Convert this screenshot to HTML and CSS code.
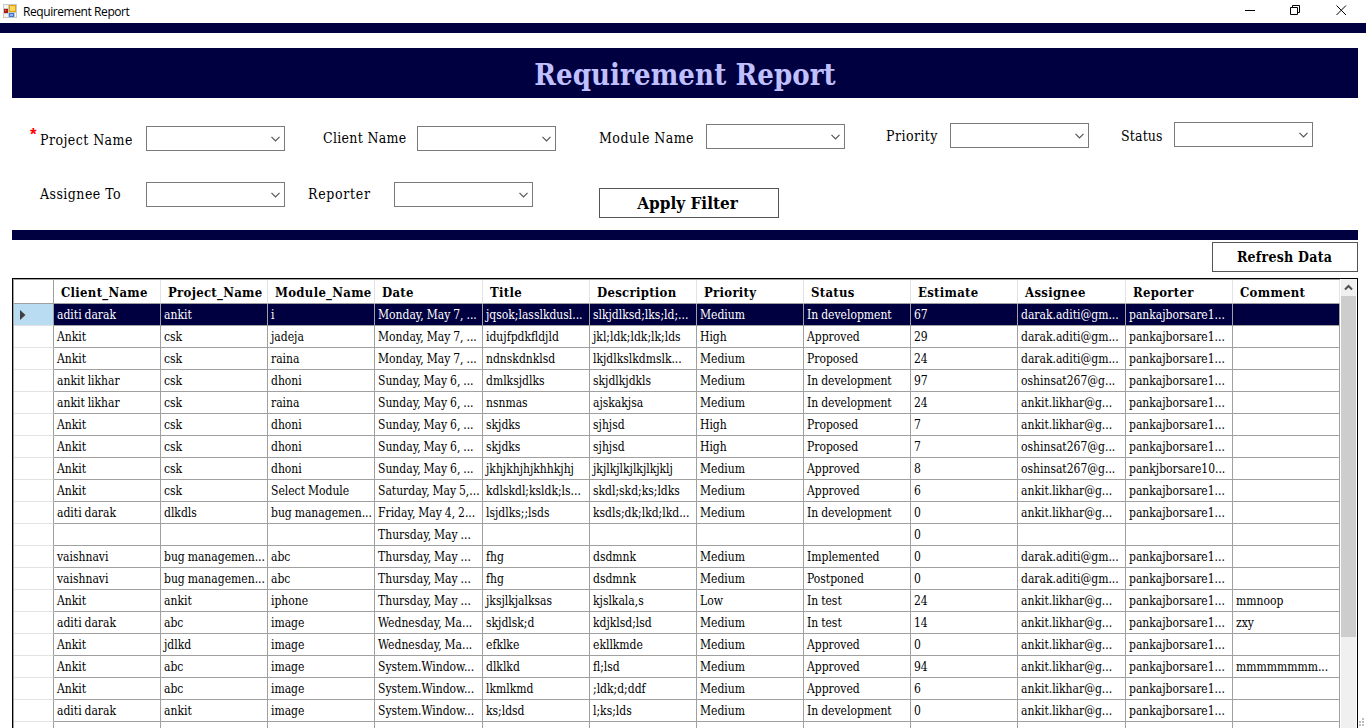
FILE: index.html
```html
<!DOCTYPE html>
<html lang="en">
<head>
<meta charset="utf-8">
<title>Requirement Report</title>
<link rel="stylesheet" href="styles.css">
</head>
<body>
<header class="titlebar">
  <svg class="app-icon" width="14" height="14" viewBox="0 0 14 14">
    <rect width="14" height="14" fill="#c9c9c9"/>
    <path d="M1 1h4v3H1zM1 10h4v3H1zM12 9h1v4h-1z" fill="#f4f4f4"/>
    <rect x="1" y="5" width="4" height="4" fill="#b01818"/><rect x="2" y="6" width="1" height="1" fill="#f08080"/>
    <rect x="6" y="1" width="7" height="7" fill="#e0a000"/><rect x="7" y="2" width="5" height="5" fill="#ffd75e"/>
    <rect x="6" y="9" width="5" height="4" fill="#3a74d8"/><rect x="7" y="10" width="3" height="2" fill="#8db6f5"/>
  </svg>
  <span class="window-title">Requirement Report</span>
  <svg class="window-buttons" width="102" height="12" viewBox="0 0 102 12" fill="none" stroke="#000">
    <path d="M0 5.500h10M45.500 2.500h7v7h-7zM47.500 2v-1.500h7v7H53"/>
    <path d="M91.500 .500l9.500 9.500M101 .500l-9.500 9.500"/>
  </svg>
</header>
<div class="bar"></div>
<main class="form">
  <h1 class="banner">Requirement Report</h1>
  <section class="filters">
    <div class="filter-row">
      <span class="required">*</span>
      <div class="field project"><label>Project Name</label><div class="combo"><svg width="9" height="6" viewBox="0 0 9 6"><path d="M.5 .8l4 4 4-4"/></svg></div></div>
      <div class="field client"><label>Client Name</label><div class="combo"><svg width="9" height="6" viewBox="0 0 9 6"><path d="M.5 .8l4 4 4-4"/></svg></div></div>
      <div class="field module"><label>Module Name</label><div class="combo"><svg width="9" height="6" viewBox="0 0 9 6"><path d="M.5 .8l4 4 4-4"/></svg></div></div>
      <div class="field priority"><label>Priority</label><div class="combo"><svg width="9" height="6" viewBox="0 0 9 6"><path d="M.5 .8l4 4 4-4"/></svg></div></div>
      <div class="field status"><label>Status</label><div class="combo"><svg width="9" height="6" viewBox="0 0 9 6"><path d="M.5 .8l4 4 4-4"/></svg></div></div>
    </div>
    <div class="filter-row second">
      <div class="field assignee"><label>Assignee To</label><div class="combo"><svg width="9" height="6" viewBox="0 0 9 6"><path d="M.5 .8l4 4 4-4"/></svg></div></div>
      <div class="field reporter"><label>Reporter</label><div class="combo"><svg width="9" height="6" viewBox="0 0 9 6"><path d="M.5 .8l4 4 4-4"/></svg></div></div>
      <button class="button apply">Apply Filter</button>
    </div>
  </section>
  <div class="bar"></div>
  <button class="button refresh">Refresh Data</button>
  <div class="grid">
    <table class="data">
      <colgroup><col class="c40"><col><col><col><col class="c108"><col><col><col><col><col><col class="c108"><col><col></colgroup>
      <thead>
      <tr><th><th>Client_Name<th>Project_Name<th>Module_Name<th>Date<th>Title<th>Description<th>Priority<th>Status<th>Estimate<th>Assignee<th>Reporter<th>Comment
      </thead>
      <tbody>
      <tr class="selected"><th><svg width="6" height="10" viewBox="0 0 6 10"><path d="M0 0l5.500 5L0 10z" fill="#404040"/></svg><td>aditi darak<td>ankit<td>i<td>Monday, May 7, ...<td>jqsok;lasslkdusl...<td>slkjdlksd;lks;ld;...<td>Medium<td>In development<td>67<td>darak.aditi@gm...<td>pankajborsare1...<td>
      <tr><th><td>Ankit<td>csk<td>jadeja<td>Monday, May 7, ...<td>idujfpdkfldjld<td>jkl;ldk;ldk;lk;lds<td>High<td>Approved<td>29<td>darak.aditi@gm...<td>pankajborsare1...<td>
      <tr><th><td>Ankit<td>csk<td>raina<td>Monday, May 7, ...<td>ndnskdnklsd<td>lkjdlkslkdmslk...<td>Medium<td>Proposed<td>24<td>darak.aditi@gm...<td>pankajborsare1...<td>
      <tr><th><td>ankit likhar<td>csk<td>dhoni<td>Sunday, May 6, ...<td>dmlksjdlks<td>skjdlkjdkls<td>Medium<td>In development<td>97<td>oshinsat267@g...<td>pankajborsare1...<td>
      <tr><th><td>ankit likhar<td>csk<td>raina<td>Sunday, May 6, ...<td>nsnmas<td>ajskakjsa<td>Medium<td>In development<td>24<td>ankit.likhar@g...<td>pankajborsare1...<td>
      <tr><th><td>Ankit<td>csk<td>dhoni<td>Sunday, May 6, ...<td>skjdks<td>sjhjsd<td>High<td>Proposed<td>7<td>ankit.likhar@g...<td>pankajborsare1...<td>
      <tr><th><td>Ankit<td>csk<td>dhoni<td>Sunday, May 6, ...<td>skjdks<td>sjhjsd<td>High<td>Proposed<td>7<td>oshinsat267@g...<td>pankajborsare1...<td>
      <tr><th><td>Ankit<td>csk<td>dhoni<td>Sunday, May 6, ...<td>jkhjkhjhjkhhkjhj<td>jkjlkjlkjlkjlkjklj<td>Medium<td>Approved<td>8<td>oshinsat267@g...<td>pankjborsare10...<td>
      <tr><th><td>Ankit<td>csk<td>Select Module<td>Saturday, May 5,...<td>kdlskdl;ksldk;ls...<td>skdl;skd;ks;ldks<td>Medium<td>Approved<td>6<td>ankit.likhar@g...<td>pankajborsare1...<td>
      <tr><th><td>aditi darak<td>dlkdls<td>bug managemen...<td>Friday, May 4, 2...<td>lsjdlks;;lsds<td>ksdls;dk;lkd;lkd...<td>Medium<td>In development<td>0<td>ankit.likhar@g...<td>pankajborsare1...<td>
      <tr><th><td><td><td><td>Thursday, May ...<td><td><td><td><td>0<td><td><td>
      <tr><th><td>vaishnavi<td>bug managemen...<td>abc<td>Thursday, May ...<td>fhg<td>dsdmnk<td>Medium<td>Implemented<td>0<td>darak.aditi@gm...<td>pankajborsare1...<td>
      <tr><th><td>vaishnavi<td>bug managemen...<td>abc<td>Thursday, May ...<td>fhg<td>dsdmnk<td>Medium<td>Postponed<td>0<td>darak.aditi@gm...<td>pankajborsare1...<td>
      <tr><th><td>Ankit<td>ankit<td>iphone<td>Thursday, May ...<td>jksjlkjalksas<td>kjslkala,s<td>Low<td>In test<td>24<td>ankit.likhar@g...<td>pankajborsare1...<td>mmnoop
      <tr><th><td>aditi darak<td>abc<td>image<td>Wednesday, Ma...<td>skjdlsk;d<td>kdjklsd;lsd<td>Medium<td>In test<td>14<td>ankit.likhar@g...<td>pankajborsare1...<td>zxy
      <tr><th><td>Ankit<td>jdlkd<td>image<td>Wednesday, Ma...<td>efklke<td>ekllkmde<td>Medium<td>Approved<td>0<td>ankit.likhar@g...<td>pankajborsare1...<td>
      <tr><th><td>Ankit<td>abc<td>image<td>System.Window...<td>dlklkd<td>fl;lsd<td>Medium<td>Approved<td>94<td>ankit.likhar@g...<td>pankajborsare1...<td>mmmmmmmm...
      <tr><th><td>Ankit<td>abc<td>image<td>System.Window...<td>lkmlkmd<td>;ldk;d;ddf<td>Medium<td>Approved<td>6<td>ankit.likhar@g...<td>pankajborsare1...<td>
      <tr><th><td>aditi darak<td>ankit<td>image<td>System.Window...<td>ks;ldsd<td>l;ks;lds<td>Medium<td>In development<td>0<td>ankit.likhar@g...<td>pankajborsare1...<td>
      <tr><th><td><td><td><td><td><td><td><td><td><td><td><td>
      </tbody>
    </table>
    <div class="scrollbar">
      <div class="scroll-up"><svg width="9" height="7" viewBox="0 0 9 7"><path d="M1 5.500l3.500-3.500 3.500 3.500" fill="none" stroke="#505050" stroke-width="2"/></svg></div>
      <div class="thumb"></div>
    </div>
  </div>
</main>
<svg class="grip" width="6" height="9" viewBox="0 0 6 9" fill="#bfbfbf"><path d="M3 0h2v2H3zM0 3h2v2H0zM3 3h2v2H3zM0 6h2v2H0zM3 6h2v2H3z"/></svg>
</body>
</html>
```
FILE: styles.css
```css
* { box-sizing: border-box; }
body {
  margin: 0;
  height: 728px;
  overflow: hidden;
  background: #fff;
  color: #000;
  font-family: "DejaVu Serif Condensed", "DejaVu Serif", serif;
  font-stretch: condensed;
}
.titlebar { display: flex; align-items: center; height: 23px; padding: 0 19px 0 3px; }
.app-icon { margin-top: -1px; }
.window-title { margin-left: 6px; font: 12px "Open Sans", "Noto Sans", sans-serif; letter-spacing: -0.42px; }
.window-buttons { margin: -1px 0 0 auto; }
.bar { height: 10px; background: #000040; }
.form { display: flex; flex-direction: column; padding: 15px 8px 0 12px; height: 695px; }
.banner {
  flex: none;
  margin: 0;
  height: 50px;
  line-height: 54px;
  background: #000040;
  color: #c0c0ff;
  text-align: center;
  font-size: 29px;
  letter-spacing: 0.1px;
}
.filters { flex: none; height: 132px; padding: 24px 0 0 18px; }
.filter-row { display: flex; align-items: flex-start; height: 60px; }
.filter-row.second { padding-left: 10px; }
.required { width: 10px; margin-top: 3px; color: #f00; font: bold 17px/20px "Liberation Sans", sans-serif; }
.field { display: flex; align-items: flex-start; }
.field label { font-size: 14px; line-height: 25px; letter-spacing: 0.45px; white-space: nowrap; }
.combo {
  display: flex;
  align-items: center;
  justify-content: flex-end;
  width: 139px;
  height: 25px;
  padding-right: 4px;
  border: 1px solid #7a7a7a;
}
.combo path { fill: none; stroke: #555; stroke-width: 1.2; }
.project label { width: 106px; margin-top: 6px; }
.project .combo { margin-top: 4px; }
.client { margin-left: 38px; }
.client label { width: 94px; margin-top: 4px; letter-spacing: 0.3px; }
.client .combo { margin-top: 4px; }
.module { margin-left: 43px; }
.module label { width: 107px; margin-top: 4px; }
.module .combo { margin-top: 2px; }
.priority { margin-left: 41px; }
.priority label { width: 64px; margin-top: 2px; }
.priority .combo { margin-top: 1px; }
.status { margin-left: 32px; }
.status label { width: 53px; margin-top: 2px; letter-spacing: 0.15px; }
.assignee label { width: 106px; }
.reporter { margin-left: 23px; }
.reporter label { width: 86px; letter-spacing: 0.7px; }
.button {
  padding: 0;
  height: 30px;
  border: 1px solid #555;
  background: #fff;
  color: #000;
  font-family: inherit;
  font-stretch: inherit;
  font-weight: bold;
}
.apply { width: 180px; margin: 6px 0 0 66px; padding-right: 3px; font-size: 17px; }
.form > .bar { flex: none; }
.refresh { flex: none; align-self: flex-end; width: 146px; margin-top: 2px; padding-right: 1px; font-size: 14px; letter-spacing: 0.25px; }
.grid {
  display: flex;
  flex: none;
  height: 470px;
  margin-top: 6px;
  border: 1px solid #000;
}
.data {
  flex: none;
  width: 1327px;
  border-collapse: separate;
  border-spacing: 0;
  table-layout: fixed;
  border-left: 1px solid #a0a0a0;
  border-top: 1px solid #a0a0a0;
  align-self: flex-start;
}
.data col { width: 107px; }
.data .c40 { width: 40px; }
.data .c108 { width: 108px; }
.data td, .data th { padding: 0; white-space: nowrap; text-align: left; }
.data thead th {
  height: 24px;
  padding: 2px 0 0 7px;
  border-right: 1px solid #e3e3e3;
  border-bottom: 1px solid #a0a0a0;
  font-size: 13px;
  line-height: 21px;
  letter-spacing: 0.3px;
}
.data thead th:first-child { border-right-color: #a0a0a0; }
.data tbody th {
  height: 22px;
  padding-left: 6px;
  border-right: 1px solid #a0a0a0;
  border-bottom: 1px solid #e3e3e3;
}
.data tbody th svg { display: block; }
.data td {
  height: 22px;
  padding: 1px 0 0 3px;
  border-right: 1px solid #a0a0a0;
  border-bottom: 1px solid #a0a0a0;
  font-size: 12px;
  line-height: 20px;
  word-spacing: -0.5px;
}
.data .selected th { background: #b9dcf3; }
.data .selected td { background: #000040; color: #fff; }
.scrollbar { width: 15px; margin-left: 1px; background: #f0f0f0; }
.scroll-up { display: flex; align-items: center; justify-content: center; height: 17px; }
.thumb { height: 341px; background: #cdcdcd; }
.grip { position: absolute; left: 1359px; top: 718px; }
```
